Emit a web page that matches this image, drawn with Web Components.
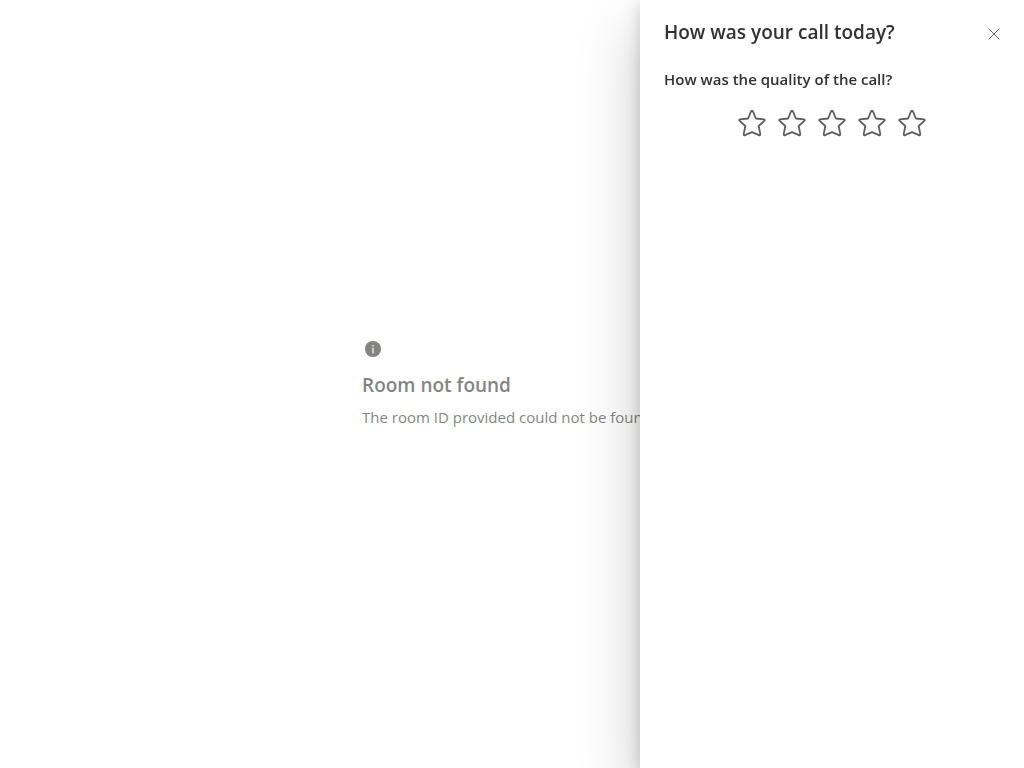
<!DOCTYPE html>
<html lang="en">
<head>
<meta charset="utf-8">
<meta name="viewport" content="width=device-width, initial-scale=1">
<title>Call</title>
<style>
body { margin: 0; background: #fff; color: #323130; font: 16px/22px "Segoe UI", "Open Sans", "Noto Sans", sans-serif; }
</style>
</head>
<body>
<call-notice heading="Room not found">The room ID provided could not be found.</call-notice>
<survey-panel heading="How was your call today?">
  <star-rating label="How was the quality of the call?" max="5"></star-rating>
</survey-panel>

<template id="notice-template">
  <style>
    :host { display: flex; min-height: 100vh; align-items: center; justify-content: center; }
    section { display: flex; flex-direction: column; min-width: 300px; padding-top: 1px; }
    svg { width: 20px; height: 20px; display: block; }
    h1 { margin: 12px 0 4px; font-size: 19px; line-height: 28px; font-weight: 600; }
    p { margin: 0; font-size: 15px; line-height: 28px; }
  </style>
  <section>
    <svg viewBox="0 0 20 20" aria-hidden="true">
      <circle cx="11" cy="10" r="8" fill="#323130"/>
      <path d="M11 9v5" stroke="#fff" stroke-width="1.200" stroke-linecap="round"/>
      <circle cx="11" cy="6.700" r=".8" fill="#fff"/>
    </svg>
    <h1></h1>
    <p><slot></slot></p>
  </section>
</template>

<template id="panel-template">
  <style>
    :host { position: fixed; inset: 0; display: flex; justify-content: flex-end; background: rgba(255, 255, 255, .4); }
    aside { box-sizing: border-box; width: 384px; max-width: 100%; height: 100%; padding: 18px 24px 0; background: #fff; overflow: auto;
      box-shadow: 0 26px 58px rgba(0, 0, 0, .22), 0 5px 14px rgba(0, 0, 0, .18); }
    header { display: flex; justify-content: space-between; align-items: center; margin-bottom: 22px; }
    h2 { margin: 0; font-size: 19px; line-height: 28px; font-weight: 600; }
    button { display: flex; padding: 10px; margin: -8px -10px -12px 0; border: 0; background: none; color: #605e5c; cursor: pointer; }
    svg { width: 12px; height: 12px; display: block; }
  </style>
  <aside role="dialog" aria-labelledby="title">
    <header>
      <h2 id="title"></h2>
      <button type="button" aria-label="Close">
        <svg viewBox="0 0 12 12" fill="none" stroke="currentColor"><path d="M.7 .7l10.600 10.600M11.300 .7L.7 11.300"/></svg>
      </button>
    </header>
    <slot></slot>
  </aside>
</template>

<template id="rating-template">
  <style>
    :host { display: block; }
    fieldset { margin: 0; padding: 0; border: 0; min-width: 0; }
    legend { padding: 0; margin-bottom: 19px; font-size: 15px; line-height: 22px; font-weight: 600; }
    .stars { display: flex; justify-content: center; gap: 12px; }
    label { position: relative; display: block; color: #605e5c; cursor: pointer; }
    input { position: absolute; inset: 0; width: 100%; height: 100%; margin: 0; opacity: 0; cursor: pointer; }
    svg { width: 28px; height: 28px; display: block; }
    input:focus-visible + svg { outline: 1px solid #605e5c; }
    label:has(~ label input:checked) path, input:checked + svg path { fill: currentColor; }
  </style>
  <fieldset>
    <legend></legend>
    <div class="stars"></div>
  </fieldset>
</template>

<script>
class TemplateElement extends HTMLElement {
  constructor(id) {
    super();
    this.attachShadow({ mode: "open" }).append(document.getElementById(id).content.cloneNode(true));
  }
}

customElements.define("call-notice", class extends TemplateElement {
  constructor() { super("notice-template"); }
  connectedCallback() { this.shadowRoot.querySelector("h1").textContent = this.getAttribute("heading"); }
});

customElements.define("survey-panel", class extends TemplateElement {
  constructor() { super("panel-template"); }
  connectedCallback() {
    this.shadowRoot.querySelector("h2").textContent = this.getAttribute("heading");
    this.shadowRoot.querySelector("button").onclick = () => this.remove();
  }
});

customElements.define("star-rating", class extends TemplateElement {
  constructor() { super("rating-template"); }
  connectedCallback() {
    this.shadowRoot.querySelector("legend").textContent = this.getAttribute("label");
    const max = Number(this.getAttribute("max"));
    this.shadowRoot.querySelector(".stars").innerHTML = Array.from({ length: max }, (_, i) => `
      <label><input type="radio" name="rating" value="${i + 1}" aria-label="${i + 1} of ${max} stars">
        <svg viewBox="0 0 28 28" fill="none" stroke="currentColor" stroke-width="1.800" stroke-linejoin="round" aria-hidden="true">
          <path d="M13.200 2.200Q14 .9 14.800 2.200L17.900 9.500L25.900 10.300Q27.500 10.700 26.300 11.900L20.700 17L22.300 25.100Q22.400 26.700 21 26.100L14 23.200L7 26.100Q5.600 26.700 5.700 25.100L7.300 17L1.700 11.900Q.5 10.700 2.100 10.300L10.100 9.500Z"/>
        </svg></label>`).join("");
  }
});
</script>
</body>
</html>
